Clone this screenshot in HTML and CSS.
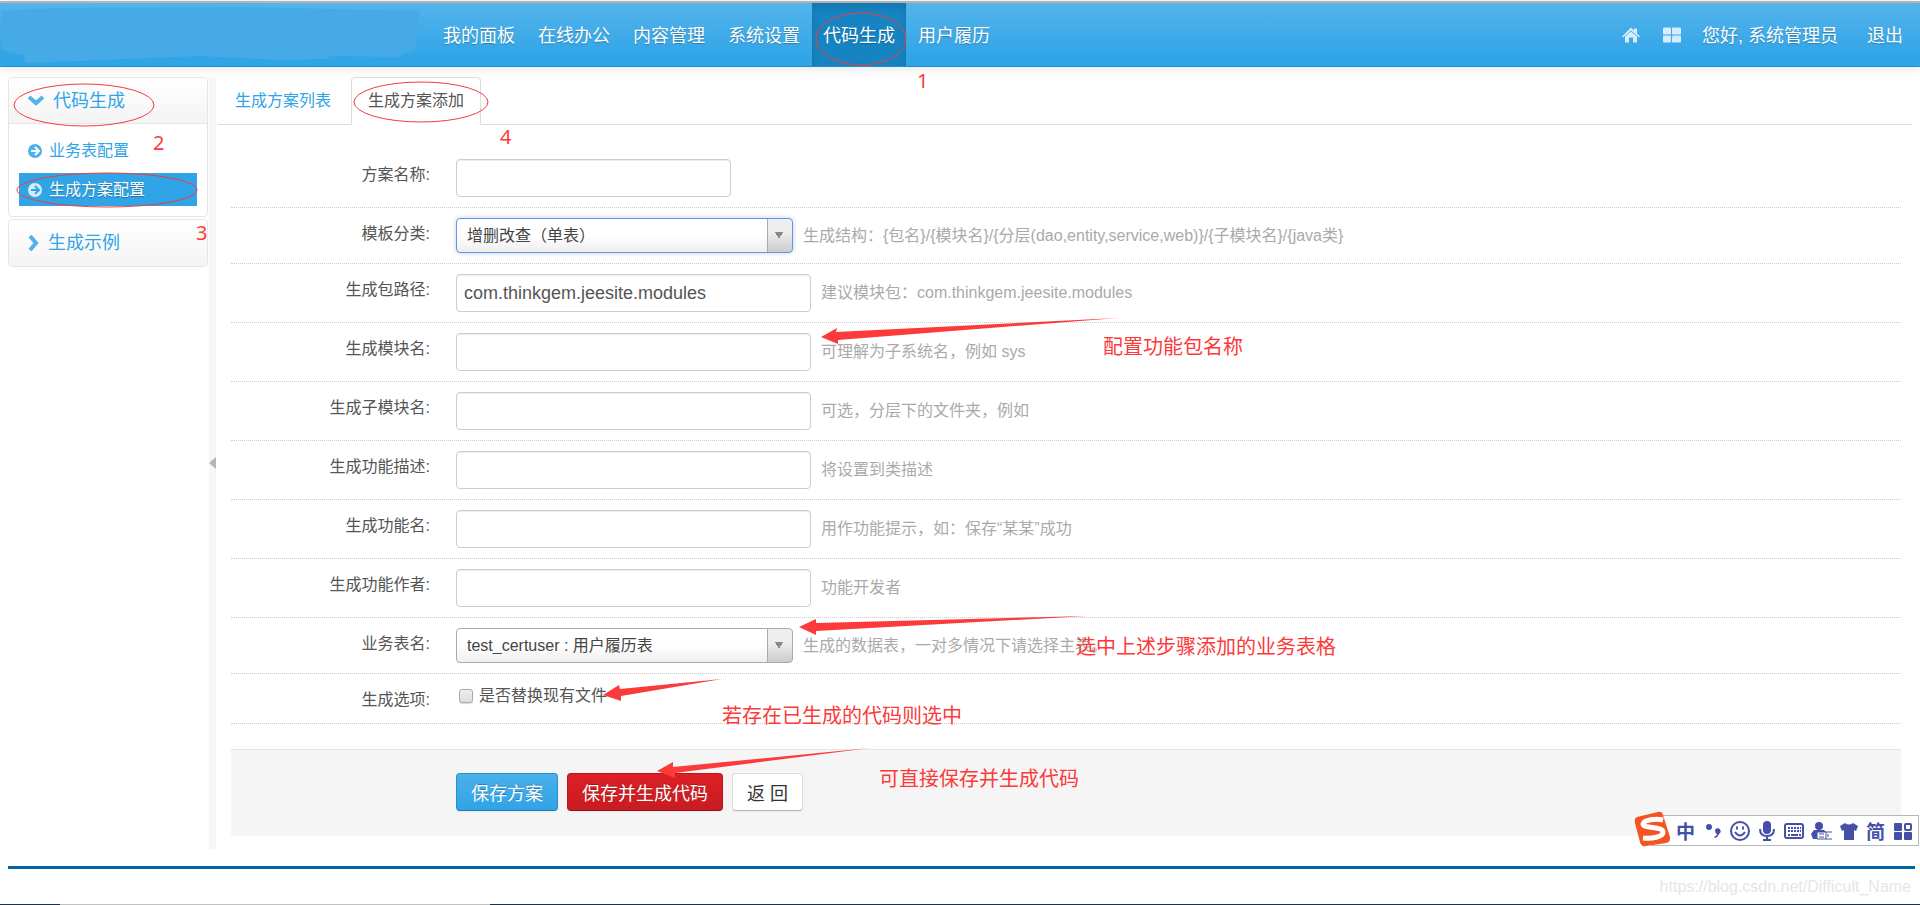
FILE: index.html
```html
<!DOCTYPE html>
<html lang="zh-CN">
<head>
<meta charset="utf-8">
<title>代码生成</title>
<link rel="stylesheet" href="styles.css">
</head>
<body>
<header class="header">
  <svg class="brand" width="424" height="60" viewBox="0 0 424 60" aria-hidden="true"><path d="M2 8 14 7 60 5 240 4 420 8 417 30 415 48 402 50 400 54 330 53 328 56 280 57 200 53 150 55 80 58 25 60 24 52 2 47Z" fill="#46aae7"/></svg>
  <nav class="nav">
    <a href="#">我的面板</a>
    <a href="#">在线办公</a>
    <a href="#">内容管理</a>
    <a href="#">系统设置</a>
    <a href="#" class="active">代码生成</a>
    <a href="#">用户履历</a>
  </nav>
  <div class="user">
    <a href="#" aria-label="首页"><svg width="18" height="15" viewBox="0 0 18 15"><path d="M9 0 12 3V1H15V6L18 9 17 10 9 3 1 10 0 9ZM9 4 15 9V15H11V10H7V15H3V9Z"/></svg></a>
    <a href="#" aria-label="主题"><svg width="18" height="15" viewBox="0 0 18 15"><rect width="8" height="7" rx="1"/><rect x="9" width="9" height="7" rx="1"/><rect y="8" width="8" height="7" rx="1"/><rect x="9" y="8" width="9" height="7" rx="1"/></svg></a>
    <a href="#" class="hello">您好, 系统管理员</a>
    <a href="#" class="logout">退出</a>
  </div>
</header>

<div class="main">
  <aside class="sidebar">
    <section class="group">
      <a href="#" class="group-title open"><svg width="16" height="11" viewBox="0 0 16 11"><path d="M1 2 8 8 15 2" fill="none" stroke="#51b3ec" stroke-width="4"/></svg>代码生成</a>
      <ul class="menu">
        <li><a href="#"><svg width="14" height="14" viewBox="0 0 14 14"><circle cx="7" cy="7" r="7" fill="#4fb1ea"/><path d="M3 7H10M7 3 11 7 7 11" fill="none" stroke="#fff" stroke-width="2"/></svg>业务表配置</a></li>
        <li><a href="#" class="current"><svg width="14" height="14" viewBox="0 0 14 14"><circle cx="7" cy="7" r="7" fill="#d5ecfa"/><path d="M3 7H10M7 3 11 7 7 11" fill="none" stroke="#2fa4e7" stroke-width="2"/></svg>生成方案配置</a></li>
      </ul>
    </section>
    <section class="group">
      <a href="#" class="group-title"><svg width="11" height="16" viewBox="0 0 11 16"><path d="M2 1 8 8 2 15" fill="none" stroke="#51b3ec" stroke-width="4"/></svg>生成示例</a>
    </section>
  </aside>
  <button class="splitter" type="button" aria-label="收起菜单"><svg width="7" height="12" viewBox="0 0 7 12"><path d="M0 6 7 0V12Z" fill="#b5b5b5"/></svg></button>

  <main class="content">
    <nav class="tabs">
      <a href="#">生成方案列表</a>
      <a href="#" class="active">生成方案添加</a>
    </nav>
    <form class="form">
      <div class="row">
        <label for="name">方案名称:</label>
        <input id="name" class="text short" type="text">
      </div>
      <div class="row">
        <label for="category">模板分类:</label>
        <select id="category" class="select focused"><option>增删改查（单表）</option></select>
        <span class="hint">生成结构：{包名}/{模块名}/{分层(dao,entity,service,web)}/{子模块名}/{java类}</span>
      </div>
      <div class="row">
        <label for="package">生成包路径:</label>
        <input id="package" class="text" type="text" value="com.thinkgem.jeesite.modules">
        <span class="hint">建议模块包：com.thinkgem.jeesite.modules</span>
      </div>
      <div class="row">
        <label for="module">生成模块名:</label>
        <input id="module" class="text" type="text">
        <span class="hint">可理解为子系统名，例如 sys</span>
      </div>
      <div class="row">
        <label for="submodule">生成子模块名:</label>
        <input id="submodule" class="text" type="text">
        <span class="hint">可选，分层下的文件夹，例如</span>
      </div>
      <div class="row">
        <label for="desc">生成功能描述:</label>
        <input id="desc" class="text" type="text">
        <span class="hint">将设置到类描述</span>
      </div>
      <div class="row">
        <label for="func">生成功能名:</label>
        <input id="func" class="text" type="text">
        <span class="hint">用作功能提示，如：保存“某某”成功</span>
      </div>
      <div class="row">
        <label for="author">生成功能作者:</label>
        <input id="author" class="text" type="text">
        <span class="hint">功能开发者</span>
      </div>
      <div class="row">
        <label for="table">业务表名:</label>
        <select id="table" class="select"><option>test_certuser : 用户履历表</option></select>
        <span class="hint">生成的数据表，一对多情况下请选择主表。</span>
      </div>
      <div class="row options">
        <span class="label">生成选项:</span>
        <input id="replace" class="check" type="checkbox"><label class="check-label" for="replace">是否替换现有文件</label>
      </div>
      <div class="actions">
        <button type="submit" class="btn primary">保存方案</button>
        <button type="button" class="btn danger">保存并生成代码</button>
        <button type="button" class="btn">返 回</button>
      </div>
    </form>
  </main>
</div>
<footer class="footer">
  <span class="watermark">https://blog.csdn.net/Difficult_Name</span>
</footer>
<div class="taskbar"></div>

<div class="notes">
  <svg class="marks" width="1200" height="800" viewBox="0 0 1200 800" aria-hidden="true">
    <g fill="none" stroke="#f23c3c">
      <ellipse cx="84" cy="105" rx="70" ry="21"/>
      <ellipse cx="107" cy="190" rx="90" ry="17"/>
      <ellipse cx="421" cy="102" rx="67" ry="20"/>
      <ellipse cx="861" cy="39" rx="45" ry="26"/>
    </g>
    <g fill="#fc3a3a">
      <path d="M821 337 837 328 836 332 1118 318 838 340 838 344Z"/>
      <path d="M799 627 816 619V623L1088 616 816 631V635Z"/>
      <path d="M603 695 619 685 620 689 722 679 621 696 621 701Z"/>
      <path d="M657 771 673 762V767L870 748 675 773V778Z"/>
    </g>
  </svg>
  <span class="note n1">1</span>
  <span class="note n2">2</span>
  <span class="note n3">3</span>
  <span class="note n4">4</span>
  <span class="note t1">配置功能包名称</span>
  <span class="note t2">选中上述步骤添加的业务表格</span>
  <span class="note t3">若存在已生成的代码则选中</span>
  <span class="note t4">可直接保存并生成代码</span>
</div>

<div class="ime">
  <svg class="ime-logo" width="37" height="36" viewBox="0 0 37 36"><path d="M3 6 24 1Q28 0 29 4L36 26Q37 31 32 32L12 35Q7 36 6 31L1 12Q0 7 3 6Z" fill="#f4541f"/><path d="M29 9C22 7 10 9 9 13 9 18 29 15 29 21 29 26 18 28 9 27" fill="none" stroke="#fff" stroke-width="5"/></svg>
  <span class="ime-item">中</span>
  <svg width="20" height="20" viewBox="0 0 20 20"><circle cx="6" cy="6" r="3"/><path d="M12 9a3 3 0 1 1 4 4q-1 3-4 4l-1-1q3-1 3-3-2-1-2-4Z"/></svg>
  <svg width="20" height="20" viewBox="0 0 20 20"><circle cx="10" cy="10" r="9" fill="none" stroke="#4350a5" stroke-width="2"/><ellipse cx="7" cy="7" rx="1" ry="2"/><ellipse cx="13" cy="7" rx="1" ry="2"/><path d="M5 11q5 7 10 0" fill="none" stroke="#4350a5" stroke-width="2"/></svg>
  <svg width="20" height="20" viewBox="0 0 20 20"><rect x="6" width="8" height="13" rx="4"/><path d="M3 8q0 7 7 7t7-7M10 15v4M6 19h8" fill="none" stroke="#4350a5" stroke-width="2"/></svg>
  <svg width="20" height="20" viewBox="0 0 20 20"><rect x="1" y="3" width="18" height="14" rx="2" fill="none" stroke="#4350a5" stroke-width="2"/><path d="M4 7h13M4 10h13" stroke="#4350a5" stroke-width="2" stroke-dasharray="2 1"/><path d="M4 14h2M7 14h7M15 14h2" stroke="#4350a5" stroke-width="2"/></svg>
  <svg width="21" height="20" viewBox="0 0 21 20"><circle cx="8" cy="5" r="4"/><path d="M0 13 3 9H13L15 11H6V18H2Z"/><path d="M6 11H21M6 18H21M6 11V18M15 11V18M8 13H13M8 16H13M17 13V16" fill="none" stroke="#4350a5"/></svg>
  <svg width="20" height="20" viewBox="0 0 20 20"><path d="M6 2q4 3 8 0l5 3-2 5-2-1v10H5V9L3 10 1 5Z"/></svg>
  <span class="ime-item">简</span>
  <svg width="20" height="20" viewBox="0 0 20 20"><rect x="1" y="2" width="8" height="8" rx="1"/><rect x="1" y="11" width="8" height="8" rx="1"/><rect x="11" y="11" width="8" height="8" rx="1"/><rect x="12" y="3" width="6" height="6" rx="1" fill="none" stroke="#4350a5" stroke-width="2"/></svg>
</div>
</body>
</html>
```

FILE: styles.css
```css
* { box-sizing: border-box; }
body {
  margin: 0;
  padding-top: 1px;
  position: relative;
  overflow: hidden;
  background: #fff;
  color: #555;
  font: 16px/24px "Liberation Sans", "Noto Sans CJK SC", sans-serif;
}
a { color: #2fa4e7; text-decoration: none; }
.header {
  display: flex;
  height: 66px;
  border-top: 2px solid #b4b4b4;
  border-bottom: 1px solid #1c8fd6;
  background: linear-gradient(#54b4eb, #2fa4e7 90%);
  box-shadow: 0 1px 10px rgba(0, 0, 0, .12);
}
.brand { flex: none; margin-right: 8px; }
.nav { display: flex; gap: 1px; }
.nav a, .user a {
  color: #fff;
  font-size: 18px;
  line-height: 66px;
  text-shadow: 0 1px 1px rgba(0, 0, 0, .25);
}
.nav a { height: 63px; padding: 0 11px; }
.nav .active {
  background: #1684c2;
  box-shadow: inset 0 3px 8px rgba(0, 0, 0, .125);
}
.user { display: flex; margin-left: auto; padding-right: 17px; }
.user svg { display: block; height: 64px; fill: #d4ecfb; }
.user a { margin-left: 23px; }
.user .hello { margin-left: 21px; }
.user .logout { margin-left: 29px; }

.main { display: flex; margin: 10px 8px 0; }
.sidebar { width: 200px; margin-right: 1px; }
.group { margin-bottom: 2px; border: 1px solid #e5e5e5; border-radius: 4px; }
.group-title {
  display: flex;
  align-items: center;
  gap: 9px;
  height: 46px;
  padding-left: 19px;
  background: linear-gradient(#fff, #f4f4f4);
  border-radius: 4px;
  font-size: 18px;
}
.group-title.open { border-bottom: 1px solid #e5e5e5; border-radius: 4px 4px 0 0; }
.menu { margin: 0; padding: 10px; list-style: none; }
.menu li + li { margin-top: 6px; }
.menu a { display: flex; align-items: center; gap: 7px; height: 33px; padding-left: 9px; }
.menu .current { background: #2fa4e7; color: #fff; text-shadow: 0 1px 1px rgba(0, 0, 0, .3); }
.splitter {
  display: flex;
  align-items: center;
  width: 7px;
  margin: 0 2px 0 0;
  padding: 0;
  border: 0;
  background: #f6f6f6;
}

.content { flex: 1; min-width: 0; }
.tabs { display: flex; gap: 3px; border-bottom: 1px solid #ddd; }
.tabs a { height: 47px; margin-bottom: -1px; padding: 0 16px; border: 1px solid transparent; line-height: 46px; }
.tabs a.active { height: 48px; background: #fff; border-color: #ddd #ddd #fff; border-radius: 4px 4px 0 0; color: #555; }
.form { margin: 24px 11px 13px 13px; }
.row { display: flex; align-items: center; padding: 10px 0; border-bottom: 1px dotted #ccc; }
.row > label:first-child, .label { width: 199px; margin-right: 26px; text-align: right; align-self: flex-start; padding-top: 4px; }
.text {
  width: 355px;
  height: 38px;
  padding: 0 7px;
  border: 1px solid #ccc;
  border-radius: 4px;
  background: #fff;
  box-shadow: inset 0 1px 1px rgba(0, 0, 0, .075);
  color: #555;
  font: 18px "Liberation Sans", "Noto Sans CJK SC", sans-serif;
}
.text.short { width: 275px; }
.select {
  appearance: none;
  width: 337px;
  height: 35px;
  padding: 0 34px 0 10px;
  border: 1px solid #aaa;
  border-radius: 4px;
  background:
    linear-gradient(to bottom right, #888 50%, transparent 50%) right 9px center / 4px 7px no-repeat,
    linear-gradient(to bottom left, #888 50%, transparent 50%) right 13px center / 4px 7px no-repeat,
    linear-gradient(#aaa, #aaa) right 24px top / 1px 100% no-repeat,
    linear-gradient(#eee 40%, #ccc) right / 24px 100% no-repeat,
    linear-gradient(#fff 50%, #eee);
  color: #444;
  font: 16px "Liberation Sans", "Noto Sans CJK SC", sans-serif;
}
.select.focused { border-color: #5897fb; box-shadow: 0 0 5px rgba(0, 0, 0, .2); }
.hint { margin-left: 10px; color: #aaa; white-space: nowrap; }
.options { height: 50px; align-items: flex-start; }
.check {
  appearance: none;
  width: 14px;
  height: 14px;
  margin: 5px 6px 0 3px;
  border: 1px solid #aaa;
  border-radius: 3px;
  background: linear-gradient(#eee, #ddd);
  box-shadow: 0 1px 1px rgba(0, 0, 0, .15);
}
.actions {
  display: flex;
  gap: 9px;
  margin-top: 25px;
  padding: 23px 0 25px 225px;
  border-top: 1px solid #e5e5e5;
  background: #f5f5f5;
}
.btn {
  height: 38px;
  padding: 0 14px;
  border: 1px solid #ddd;
  border-bottom-color: #b3b3b3;
  border-radius: 4px;
  background: #fff;
  box-shadow: 0 1px 2px rgba(0, 0, 0, .05);
  color: #333;
  font: 18px "Liberation Sans", "Noto Sans CJK SC", sans-serif;
}
.btn.primary { border-color: #2a90cd #2a90cd #1f78ae; background: linear-gradient(#4bb0ea, #2fa4e7); color: #fff; text-shadow: 0 -1px 0 rgba(0, 0, 0, .25); }
.btn.danger { border-color: #b8171d #b8171d #93151a; background: linear-gradient(#dd1f26, #c71c22); color: #fff; text-shadow: 0 -1px 0 rgba(0, 0, 0, .25); }

.footer {
  display: flex;
  justify-content: flex-end;
  margin: 17px 5px 0 8px;
  padding: 6px 4px 5px;
  border-top: 3px solid #0065a6;
}
.watermark { color: #e6e6e6; }
.taskbar { height: 1px; background: linear-gradient(to right, #1f2f46 60px, #c0c0c0 60px, #c0c0c0 490px, #1f2f46 490px); }

/* Red annotations drawn over the page */
.notes { position: absolute; top: 0; left: 0; pointer-events: none; }
.note { position: absolute; color: #fc3a3a; font: 20px/24px "Noto Sans", "Noto Sans CJK SC", sans-serif; white-space: nowrap; }
.n1 { left: 917px; top: 69px; }
.n2 { left: 153px; top: 131px; }
.n3 { left: 196px; top: 221px; }
.n4 { left: 500px; top: 125px; }
.t1 { left: 1103px; top: 335px; }
.t2 { left: 1076px; top: 635px; }
.t3 { left: 722px; top: 704px; }
.t4 { left: 879px; top: 767px; }

/* Floating input-method bar */
.ime {
  position: absolute;
  top: 815px;
  right: 1px;
  display: flex;
  align-items: center;
  gap: 7px;
  height: 31px;
  padding: 0 5px 0 24px;
  border: 1px solid #b5b5c5;
  background: #fff;
  color: #4350a5;
  fill: #4350a5;
}
.ime-logo { position: absolute; left: -18px; top: -5px; }
.ime-item { width: 20px; font: bold 19px/20px "Noto Sans CJK SC", sans-serif; }
```
